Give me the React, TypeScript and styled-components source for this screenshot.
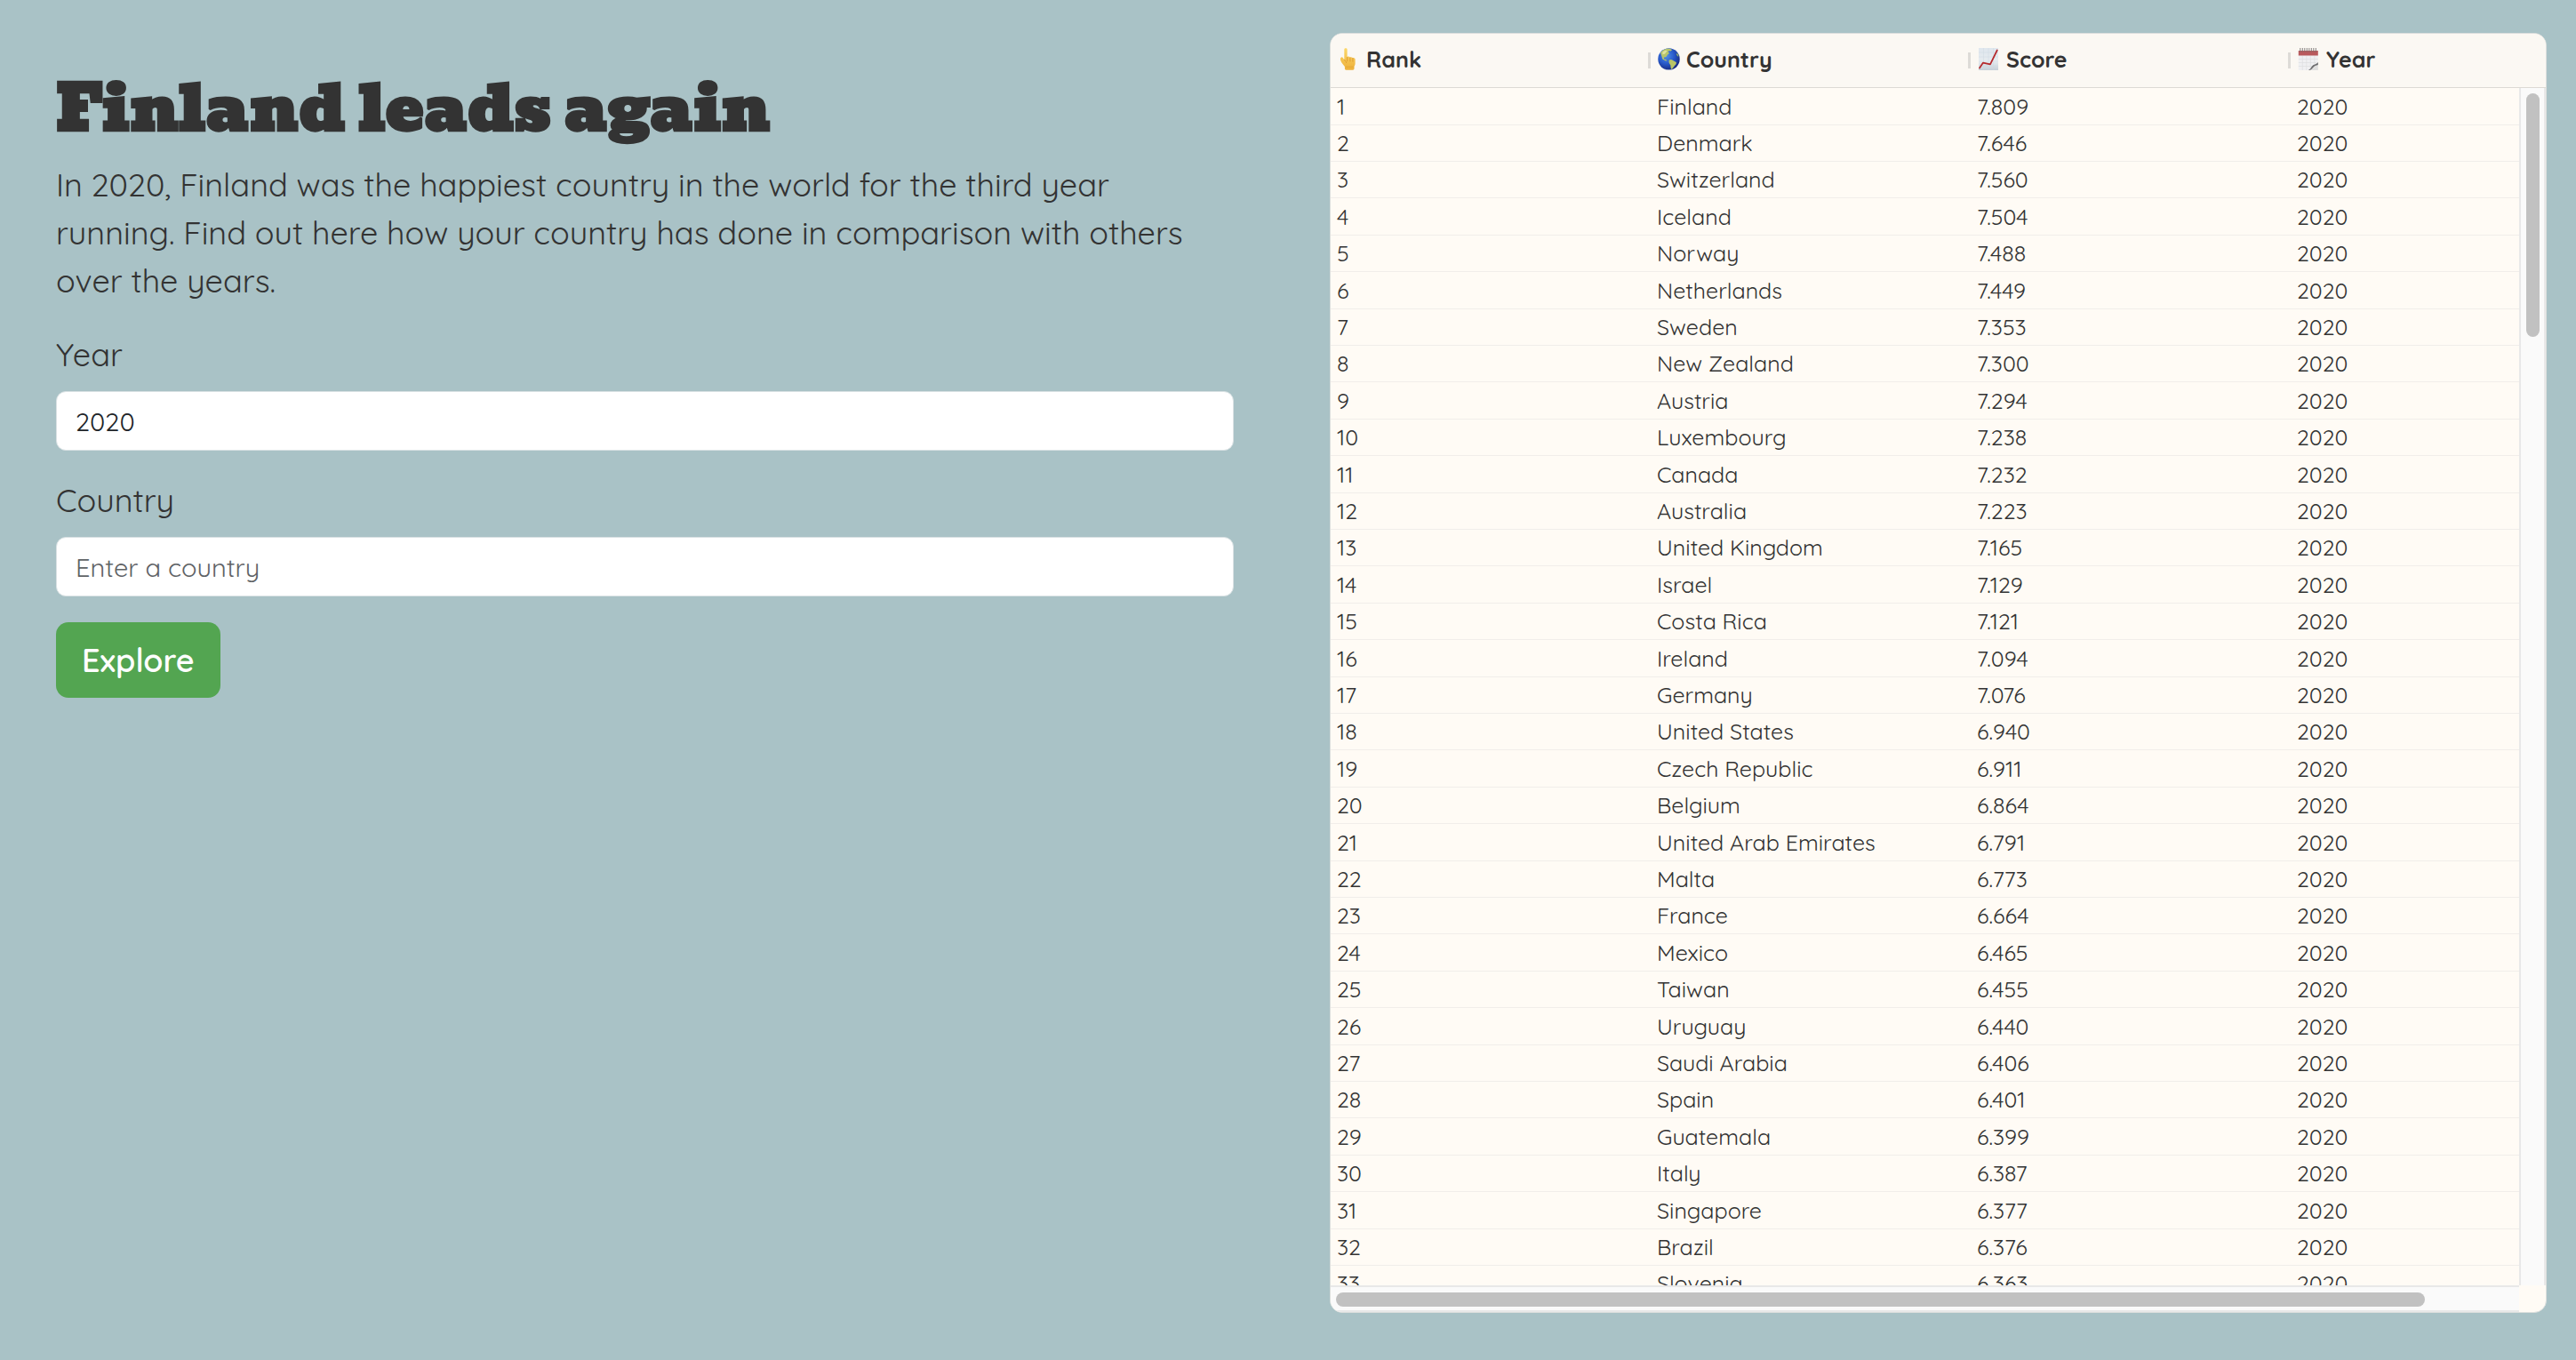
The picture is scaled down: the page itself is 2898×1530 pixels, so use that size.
import React from "react";
import styled, { createGlobalStyle } from "styled-components";

const color = {
  page: "#a9c2c6",
  ink: "#333333",
  cream: "#fffbf5",
  header: "#fbf8f3",
  headerLine: "#dddad4",
  rowLine: "#f1eeea",
  separator: "#dddbd7",
  track: "#fafafa",
  trackLine: "#e8e8e8",
  thumb: "#c1c1c1",
  green: "#53a551",
};

const GlobalStyle = createGlobalStyle`
  *, *::before, *::after { box-sizing: border-box; }
  body {
    margin: 0;
    background: ${color.page};
    color: ${color.ink};
    font-family: Quicksand, "Open Sans", sans-serif;
    font-size: 36px;
    line-height: 54px;
  }
`;

const Page = styled.main`
  display: grid;
  grid-template-columns: minmax(0, 1fr) minmax(0, 1fr);
  height: 100vh;
`;

const Intro = styled.section`
  display: flex;
  flex-direction: column;
  padding: 79px 61px 0 63px;
`;

const Title = styled.h1`
  margin: 0 0 16px;
  font-family: Bevan, "DejaVu Serif", serif;
  font-size: 72px;
  font-weight: 700;
  line-height: 86px;
`;

const Lead = styled.p`
  margin: 0 0 29px;
`;

const Form = styled.form`
  display: flex;
  flex-direction: column;
  align-items: flex-start;
  gap: 29px;
`;

const Field = styled.div`
  display: flex;
  flex-direction: column;
  gap: 14px;
  width: 100%;
`;

const TextInput = styled.input`
  width: 100%;
  height: 67px;
  padding: 0 21px;
  border: 1px solid #d9e1e3;
  border-radius: 11px;
  background: #ffffff;
  color: #212529;
  font: inherit;
  font-size: 29px;
  outline: none;

  &::placeholder {
    color: #5f6366;
    opacity: 1;
  }
`;

const ExploreButton = styled.button`
  height: 85px;
  padding: 0 29px;
  border: 0;
  border-radius: 14px;
  background: ${color.green};
  color: #ffffff;
  font: inherit;
  font-weight: 600;
`;

const TableSide = styled.section`
  padding: 37px 33px 53px 47px;
  min-height: 0;
`;

const Grid = styled.div`
  display: grid;
  grid-template-columns: minmax(0, 1fr) 30px;
  grid-template-rows: 61px minmax(0, 1fr) 30px;
  height: 100%;
  overflow: hidden;
  border: 1px solid #dcdfdd;
  border-radius: 14px;
  background: ${color.cream};
`;

const Viewport = styled.div`
  grid-area: 1 / 1 / 3 / 3;
  overflow: hidden;
`;

const Table = styled.table`
  width: 1440px;
  table-layout: fixed;
  border-spacing: 0;
  font-size: 25px;
  line-height: 31px;
  text-align: left;
`;

const HeadCell = styled.th`
  height: 61px;
  padding: 0 8px 4px;
  border-bottom: 1px solid ${color.headerLine};
  background: linear-gradient(${color.separator}, ${color.separator}) no-repeat right center / 3px 18px,
    ${color.header};
  font-weight: 700;
`;

const HeadLabel = styled.span`
  display: flex;
  align-items: center;
  gap: 7px;
`;

const Row = styled.tr`
  height: 41px;

  &:nth-child(5n + 1),
  &:nth-child(5n + 4) {
    height: 42px;
  }
`;

const Cell = styled.td`
  padding: 0 7px 1px;
  border-bottom: 1px solid ${color.rowLine};
`;

const VerticalBar = styled.div`
  grid-area: 2 / 2;
  padding: 6px 5px 0 6px;
  border: solid ${color.trackLine};
  border-width: 0 2px;
  background: ${color.track};
`;

const HorizontalBar = styled.div`
  grid-area: 3 / 1;
  padding: 6px 14px 0 6px;
  border: solid ${color.trackLine};
  border-width: 2px 0;
  background: ${color.track};
`;

const Thumb = styled.div<{ $width: string; $height: string }>`
  width: ${(p) => p.$width};
  height: ${(p) => p.$height};
  border-radius: 8px;
  background: ${color.thumb};
`;

const Icon = styled.svg`
  flex: none;
  width: 25px;
  height: 25px;
`;

const HandIcon = () => (
  <Icon viewBox="0 0 25 25" aria-hidden="true">
    <defs>
      <linearGradient id="skin" x1="0" y1="0" x2="0" y2="1">
        <stop offset="0" stopColor="#fbd768" />
        <stop offset="1" stopColor="#eeb13b" />
      </linearGradient>
    </defs>
    <path
      d="M7.300 1.700C7.300-.1 10.600-.1 10.600 1.700V10c1-.7 2.500-.5 3.200.4 1-.5 2.300-.2 2.900.7 1.200-.5 2.900.2 2.900 1.700v4.400c0 1.500-.6 2.500-1.100 3.600V23c0 1-.6 1.700-1.500 1.700H9.400c-1 0-1.500-.7-1.500-1.700v-2.100c-1.500-1.700-3.300-3.600-4.500-6.300-.8-1.900-.7-3.600.5-4.200 1.200-.5 2 .5 2.600 1.700l.8 1.200z"
      fill="url(#skin)"
    />
    <path d="M10.700 10.500v4.200M13.900 11v4M16.900 11.500v3.700M7.300 13.500c1.500.7 2.200 1.700 2.300 3" stroke="#d9942c" strokeWidth=".8" fill="none" strokeLinecap="round" />
    <path d="M8.500 21.200h9.500" stroke="#e0a034" strokeWidth=".7" />
  </Icon>
);

const GlobeIcon = () => (
  <Icon viewBox="0 0 25 25" aria-hidden="true">
    <defs>
      <radialGradient id="sea" cx=".38" cy=".35" r=".68">
        <stop offset="0" stopColor="#4f8fe6" />
        <stop offset=".55" stopColor="#2858c8" />
        <stop offset="1" stopColor="#172a80" />
      </radialGradient>
    </defs>
    <circle cx="12.500" cy="12.500" r="12.200" fill="url(#sea)" />
    <path d="M3 5.500C5 2.800 8.200.9 11.500.6c1.800.2 3.400.6 4.600 1.300l-1.400 1.700-2.300-.3-.8 1.500 1.600 1-2.300 2-1.600 2.300-2.600.7.5 1.800 2 .5 1.200 1.500-1.800-.3-3.200-1.900L4.300 9z" fill="#b6c56c" />
    <path d="M5.500 4.200 9 2.600l1.500.8-2.700 3.300-2.500.5z" fill="#dfe3a0" />
    <path d="M12.800 13.600c1.600-1 3.200-.6 4.300.5l3.700 1.900c.4 1.600-.7 2.900-1.900 3.900-.9 1.400-2 2.800-3.300 4.200-1.200-.9-1-3-1.300-4.800-1.200-1.400-2.400-3.400-1.500-5.700z" fill="#b9c466" />
    <path d="M21.500 5.400c1 1 1.700 2.300 2.200 3.800l-1.200.3-1.400-2z" fill="#8fae66" />
    <path d="M6 23c4 1.700 9 1.700 13 0-2 1.200-4.300 1.700-6.500 1.700S8 24.200 6 23z" fill="#c9d6ee" />
  </Icon>
);

const ChartIcon = () => (
  <Icon viewBox="0 0 25 25" aria-hidden="true">
    <defs>
      <linearGradient id="sheet" x1="0" y1="0" x2="0" y2="1">
        <stop offset="0" stopColor="#dfe7ee" />
        <stop offset=".6" stopColor="#e6ebef" />
        <stop offset="1" stopColor="#c6d0d8" />
      </linearGradient>
    </defs>
    <rect x="1" width="22" height="25" fill="url(#sheet)" />
    <path d="M1 5h22M1 10h22M1 15h22M1 20h22M6.500 0v25M12 0v25M17.500 0v25" stroke="#ccd6de" strokeWidth=".4" />
    <path d="M2 22.500 6 16.600l8 1.700L21.800 2.500" stroke="#b5292c" strokeWidth="1.700" fill="none" strokeLinejoin="round" strokeLinecap="round" />
  </Icon>
);

const CalendarIcon = () => (
  <Icon viewBox="0 0 25 25" aria-hidden="true">
    <path d="M.8 3h22v13.500L14 25H.8z" fill="#f0f0f2" />
    <path d="M.8 3h22v5.600h-22z" fill="#b9595c" />
    <path d="M.8 12.500h22M.8 16.500h20M.8 20.500h17M5.300 9v16M9.800 9v16M14.300 9v15M18.800 9v12" stroke="#dadcde" strokeWidth=".6" />
    <path d="M11.800 25c3-1.200 3.600-4.800 6-6 2-.9 4-1.300 5-3v9z" fill="#dfdfdf" />
    <path d="M11.800 25c3-1.200 3.600-4.800 6-6 2-.9 4-1.300 5-3v3c-2.500.3-4.300 1.500-5.800 3.300-1 1.300-2.200 2.200-3.700 2.700z" fill="#6e6e70" />
    <path d="M2.800 0v4.500M5.300 0v4.500M7.800 0v4.500M10.300 0v4.500M12.800 0v4.500M15.300 0v4.500M17.800 0v4.500M20.300 0v4.500" stroke="#77706f" strokeWidth=".9" />
  </Icon>
);

const columns = [
  { label: "Rank", icon: <HandIcon /> },
  { label: "Country", icon: <GlobeIcon /> },
  { label: "Score", icon: <ChartIcon /> },
  { label: "Year", icon: <CalendarIcon /> },
];

const rankings: [string, string][] = [
  ["Finland", "7.809"],
  ["Denmark", "7.646"],
  ["Switzerland", "7.560"],
  ["Iceland", "7.504"],
  ["Norway", "7.488"],
  ["Netherlands", "7.449"],
  ["Sweden", "7.353"],
  ["New Zealand", "7.300"],
  ["Austria", "7.294"],
  ["Luxembourg", "7.238"],
  ["Canada", "7.232"],
  ["Australia", "7.223"],
  ["United Kingdom", "7.165"],
  ["Israel", "7.129"],
  ["Costa Rica", "7.121"],
  ["Ireland", "7.094"],
  ["Germany", "7.076"],
  ["United States", "6.940"],
  ["Czech Republic", "6.911"],
  ["Belgium", "6.864"],
  ["United Arab Emirates", "6.791"],
  ["Malta", "6.773"],
  ["France", "6.664"],
  ["Mexico", "6.465"],
  ["Taiwan", "6.455"],
  ["Uruguay", "6.440"],
  ["Saudi Arabia", "6.406"],
  ["Spain", "6.401"],
  ["Guatemala", "6.399"],
  ["Italy", "6.387"],
  ["Singapore", "6.377"],
  ["Brazil", "6.376"],
  ["Slovenia", "6.363"],
];

export default function App() {
  return (
    <>
      <GlobalStyle />
      <Page>
        <Intro>
          <Title>Finland leads again</Title>
          <Lead>
            In 2020, Finland was the happiest country in the world for the third year running. Find out here how
            your country has done in comparison with others over the years.
          </Lead>
          <Form onSubmit={(e) => e.preventDefault()}>
            <Field>
              <label htmlFor="year">Year</label>
              <TextInput id="year" type="text" defaultValue="2020" />
            </Field>
            <Field>
              <label htmlFor="country">Country</label>
              <TextInput id="country" type="text" placeholder="Enter a country" />
            </Field>
            <ExploreButton type="submit">Explore</ExploreButton>
          </Form>
        </Intro>
        <TableSide>
          <Grid>
            <Viewport>
              <Table>
                <thead>
                  <tr>
                    {columns.map((c) => (
                      <HeadCell key={c.label} scope="col">
                        <HeadLabel>
                          {c.icon}
                          {c.label}
                        </HeadLabel>
                      </HeadCell>
                    ))}
                  </tr>
                </thead>
                <tbody>
                  {rankings.map(([country, score], i) => (
                    <Row key={country}>
                      <Cell>{i + 1}</Cell>
                      <Cell>{country}</Cell>
                      <Cell>{score}</Cell>
                      <Cell>2020</Cell>
                    </Row>
                  ))}
                </tbody>
              </Table>
            </Viewport>
            <VerticalBar>
              <Thumb $width="100%" $height="274px" />
            </VerticalBar>
            <HorizontalBar>
              <Thumb $width="93%" $height="16px" />
            </HorizontalBar>
          </Grid>
        </TableSide>
      </Page>
    </>
  );
}
